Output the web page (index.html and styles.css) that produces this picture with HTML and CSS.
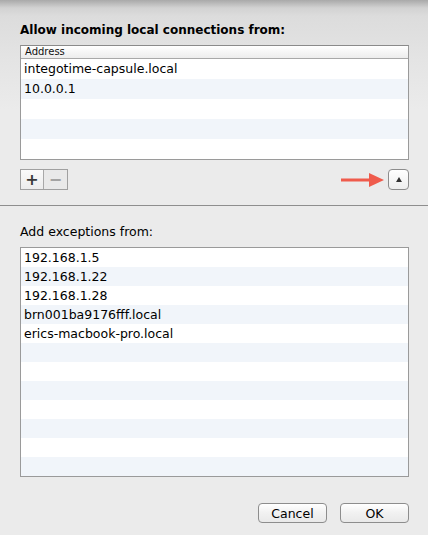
FILE: index.html
```html
<html>
<head>
  <meta name="viewport" content="width=device-width, initial-scale=1"/>
  <link rel="stylesheet" href="styles.css">
</head>
<body>
<div class="sheet">
  <section class="upper">
    <h2 class="title">Allow incoming local connections from:</h2>
    <div class="table short">
      <div class="table-head">Address</div>
      <div class="row">integotime-capsule.local</div>
      <div class="row">10.0.0.1</div>
      <div class="row"></div>
      <div class="row"></div>
      <div class="row"></div>
    </div>
    <div class="controls">
      <div class="segmented">
        <button class="seg plus">+</button>
        <button class="seg minus">&minus;</button>
      </div>
      <div class="disclosure-wrap">
        <svg class="red-arrow" width="44" height="16" viewBox="0 0 44 16">
          <line x1="0" y1="8" x2="32" y2="8" stroke="#ef5b4c" stroke-width="3" stroke-linecap="round"/>
          <polygon points="28,1 43,8 28,15" fill="#ef5b4c"/>
        </svg>
        <button class="disclosure"><span class="tri"></span></button>
      </div>
    </div>
  </section>

  <hr class="divider">

  <section class="lower">
    <p class="label">Add exceptions from:</p>
    <div class="table tall">
      <div class="row">192.168.1.5</div>
      <div class="row">192.168.1.22</div>
      <div class="row">192.168.1.28</div>
      <div class="row">brn001ba9176fff.local</div>
      <div class="row">erics-macbook-pro.local</div>
      <div class="row"></div>
      <div class="row"></div>
      <div class="row"></div>
      <div class="row"></div>
      <div class="row"></div>
      <div class="row"></div>
      <div class="row"></div>
    </div>
    <div class="actions">
      <button class="push">Cancel</button>
      <button class="push">OK</button>
    </div>
  </section>
</div>
</body>
</html>
```

FILE: styles.css
```css
body {
  margin: 0;
  width: 428px;
  height: 535px;
  overflow: hidden;
  --fontfam: 'DejaVu Sans', 'Noto Sans', sans-serif;
  font-family: var(--fontfam);
  color: #000;
  background: linear-gradient(#a9a9a9 0px, #d2d2d2 8px, #dcdcdc 16px, #e4e4e4 60px, #ebebeb 110px, #ebebeb);
}

.upper {
  padding: 23px 19px 0 20px;
}

.title {
  font-size: 12px;
  font-weight: bold;
  margin: 0 0 7px 0;
  line-height: 15px;
}

.table {
  border: 1px solid #9a9a9a;
  background: #fff;
}

.table.short {
  border-top-color: #8a8a8a;
}

.table-head {
  height: 12px;
  font-size: 10px;
  line-height: 12px;
  padding-left: 4px;
  background: linear-gradient(#ffffff, #ececec);
  border-bottom: 1px solid #a8a8a8;
  color: #111;
}

.row {
  height: 20px;
  font-size: 12.5px;
  line-height: 20px;
  padding-left: 3px;
  white-space: nowrap;
  background: #fff;
}

.table.short .row:nth-child(3),
.table.short .row:nth-child(5) {
  background: #f1f5fa;
}

.table.tall .row {
  height: 19px;
  line-height: 19px;
}

.table.tall .row:nth-child(even) {
  background: #f1f5fa;
}

.controls {
  display: flex;
  justify-content: space-between;
  align-items: center;
  margin-top: 9px;
}

.segmented {
  display: flex;
  border: 1px solid #a0a0a0;
  height: 19px;
}

.seg {
  width: 23px;
  height: 19px;
  border: 0;
  padding: 0;
  margin: 0;
  font-family: var(--fontfam);
  font-weight: bold;
  font-size: 16px;
  line-height: 17px;
}

.seg.plus {
  background: linear-gradient(#fafafa, #ececec);
  color: #3a3a3a;
  border-right: 1px solid #a8a8a8;
}

.seg.minus {
  background: #e9e9e9;
  color: #a3a3a3;
}

.disclosure-wrap {
  display: flex;
  align-items: center;
}

.red-arrow {
  margin-right: 3px;
}

.disclosure {
  width: 21px;
  height: 21px;
  border: 1px solid #8c8c8c;
  border-radius: 4px;
  background: linear-gradient(#ffffff, #eeeeee);
  padding: 0;
  display: flex;
  align-items: center;
  justify-content: center;
}

.tri {
  width: 0;
  height: 0;
  border-left: 3.5px solid transparent;
  border-right: 3.5px solid transparent;
  border-bottom: 5px solid #333;
}

.divider {
  border: 0;
  border-top: 1px solid #8e8e8e;
  margin: 15px 0 0 0;
}

.lower {
  padding: 0 19px 0 20px;
}

.label {
  font-size: 12.5px;
  margin: 18px 0 8px 0;
  line-height: 15px;
}

.actions {
  display: flex;
  justify-content: flex-end;
  gap: 13px;
  margin-top: 26px;
}

.push {
  width: 69px;
  height: 20px;
  border: 1px solid #8d8d8d;
  border-radius: 4px;
  background: linear-gradient(#ffffff, #f1f1f1 50%, #e9e9e9);
  font-family: var(--fontfam);
  font-size: 12.5px;
  line-height: 17px;
  padding: 0;
  color: #000;
}
```
